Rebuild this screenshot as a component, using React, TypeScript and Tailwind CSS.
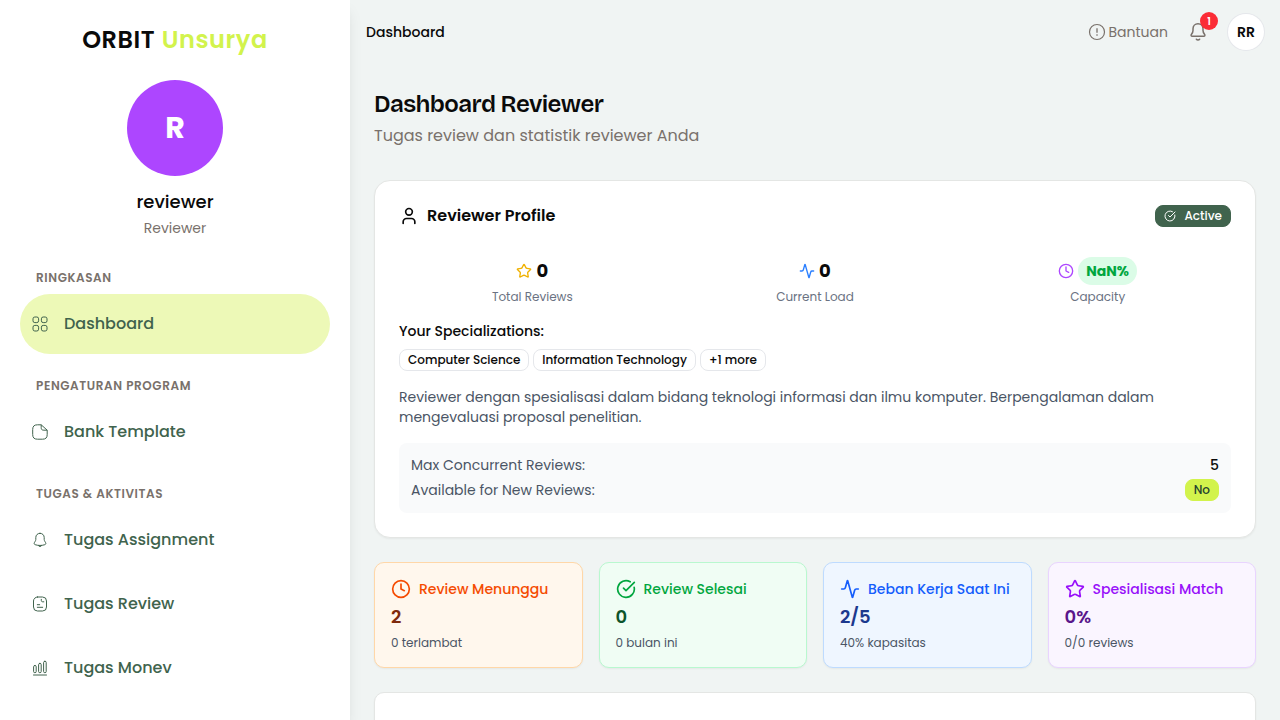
import type { ReactNode } from "react";
import { Activity, CircleCheckBig, Clock, Star, User } from "lucide-react";

type NavItem = { label: string; icon: ReactNode; active?: boolean };
type NavSection = { title: string; items: NavItem[] };

const GridIcon = () => (
  <svg className="size-4 shrink-0" viewBox="0 0 16 16" fill="none" stroke="currentColor" aria-hidden="true">
    <rect x="1" y="1" width="5.6" height="5.6" rx="1.8" />
    <rect x="9.4" y="1" width="5.6" height="5.6" rx="1.8" />
    <rect x="1" y="9.4" width="5.6" height="5.6" rx="1.8" />
    <rect x="9.4" y="9.4" width="5.6" height="5.6" rx="1.8" />
  </svg>
);

const NoteIcon = () => (
  <svg className="size-4 shrink-0" viewBox="0 0 16 16" fill="none" stroke="currentColor" strokeLinejoin="round" aria-hidden="true">
    <path d="M9.2 .8H5.5C2.2.8.7 2.2.7 5.5v5c0 3.3 1.5 4.7 4.8 4.7h5c3.3 0 4.7-1.4 4.7-4.7V6.2z" />
    <path d="M9.2.8v2.7c0 2 .7 2.7 2.7 2.7h3.3" />
  </svg>
);

const NotificationIcon = () => (
  <svg className="size-4 shrink-0" viewBox="0 0 16 16" fill="none" stroke="currentColor" strokeLinecap="round" strokeLinejoin="round" aria-hidden="true">
    <path d="M8 1.3C5.5 1.300 3.800 3.100 3.800 5.500v2c0 .6-.3 1.300-.6 1.800l-.8 1.300c-.5.9-.2 1.800.8 2.100 3.100 1 6.500 1 9.600 0 1-.3 1.300-1.300.8-2.100l-.8-1.300c-.3-.5-.6-1.200-.6-1.800v-2C12.200 3.100 10.500 1.300 8 1.300z" />
    <path d="M6.200 13.500c.7 1.400 2.900 1.400 3.600 0" />
  </svg>
);

const DocumentIcon = () => (
  <svg className="size-4 shrink-0" viewBox="0 0 16 16" fill="none" stroke="currentColor" strokeLinecap="round" strokeLinejoin="round" aria-hidden="true">
    <rect x="1.500" y="1" width="13" height="14" rx="4" />
    <path d="M9.300 3.300v1.200c0 .8.600 1.300 1.300 1.300h1.200M5.300 8.700h2.400M5.300 11.300h5.400" />
  </svg>
);

const ChartIcon = () => (
  <svg className="size-4 shrink-0" viewBox="0 0 16 16" fill="none" stroke="currentColor" strokeLinecap="round" aria-hidden="true">
    <path d="M1.500 15h13" />
    <rect x="1.600" y="5.500" width="2.600" height="7.200" rx="1.200" />
    <rect x="6.600" y="3.400" width="2.600" height="9.300" rx="1.200" />
    <rect x="11.600" y="1.300" width="2.600" height="11.400" rx="1.200" />
  </svg>
);

const InfoIcon = () => (
  <svg className="size-4 shrink-0 overflow-visible" viewBox="0 0 16 16" fill="none" stroke="currentColor" aria-hidden="true">
    <circle cx="8" cy="8" r="7.500" strokeWidth="1.200" />
    <path d="M8 4.200v4.600M8 10.200v1.500" strokeWidth="1.300" />
  </svg>
);

const BellIcon = () => (
  <svg className="size-5" viewBox="0 0 20 20" fill="none" stroke="currentColor" strokeWidth="1.500" strokeLinecap="round" strokeLinejoin="round" aria-hidden="true">
    <path d="M10 1.700C7 1.700 5 3.900 5 6.700v1.900c0 1.500-.5 2.500-1.500 3.700-.8 1-.4 2 .8 2h11.400c1.200 0 1.600-1 .8-2C15.500 11.100 15 10.100 15 8.600V6.700c0-2.800-2-5-5-5z" />
    <path d="M8.400 17.200c.7.9 2.500.9 3.200 0" />
  </svg>
);

const sections: NavSection[] = [
  { title: "Ringkasan", items: [{ label: "Dashboard", icon: <GridIcon />, active: true }] },
  { title: "Pengaturan Program", items: [{ label: "Bank Template", icon: <NoteIcon /> }] },
  {
    title: "Tugas & Aktivitas",
    items: [
      { label: "Tugas Assignment", icon: <NotificationIcon /> },
      { label: "Tugas Review", icon: <DocumentIcon /> },
      { label: "Tugas Monev", icon: <ChartIcon /> },
    ],
  },
];

const stats = [
  {
    title: "Review Menunggu",
    value: "2",
    note: "0 terlambat",
    Icon: Clock,
    card: "bg-orange-50 border-orange-200",
    head: "text-orange-600",
    number: "text-orange-900",
  },
  {
    title: "Review Selesai",
    value: "0",
    note: "0 bulan ini",
    Icon: CircleCheckBig,
    card: "bg-green-50 border-green-200",
    head: "text-green-600",
    number: "text-green-900",
  },
  {
    title: "Beban Kerja Saat Ini",
    value: "2/5",
    note: "40% kapasitas",
    Icon: Activity,
    card: "bg-blue-50 border-blue-200",
    head: "text-blue-600",
    number: "text-blue-900",
  },
  {
    title: "Spesialisasi Match",
    value: "0%",
    note: "0/0 reviews",
    Icon: Star,
    card: "bg-purple-50 border-purple-200",
    head: "text-purple-600",
    number: "text-purple-900",
  },
];

const specializations = ["Computer Science", "Information Technology", "+1 more"];

function Sidebar() {
  return (
    <aside className="w-[350px] shrink-0 overflow-hidden bg-white px-5 pt-5 shadow-lg">
      <div className="text-center text-2xl leading-10 font-semibold tracking-wide">
        ORBIT <span className="text-[#d2f34c]">Unsurya</span>
      </div>

      <div className="mt-5 flex flex-col items-center">
        <div className="flex size-24 items-center justify-center rounded-full bg-purple-500 text-3xl font-bold text-white">
          R
        </div>
        <p className="mt-3 text-lg font-medium">reviewer</p>
        <p className="mt-0.5 text-sm text-stone-500">Reviewer</p>
      </div>

      <nav className="mt-4">
        {sections.map((section) => (
          <div key={section.title} className="mb-2">
            <h2 className="px-4 pt-4 pb-2 text-xs font-semibold tracking-wider text-stone-500 uppercase">
              {section.title}
            </h2>
            <ul className="space-y-1">
              {section.items.map((item) => (
                <li key={item.label}>
                  <a
                    href="#"
                    className={`flex h-15 items-center gap-4 rounded-full px-3 font-medium text-[#40634d] ${
                      item.active ? "bg-[#edf9b7]" : ""
                    }`}
                  >
                    {item.icon}
                    {item.label}
                  </a>
                </li>
              ))}
            </ul>
          </div>
        ))}
      </nav>
    </aside>
  );
}

function Header() {
  return (
    <header className="flex h-16 shrink-0 items-center justify-between px-4">
      <span className="text-sm font-medium">Dashboard</span>
      <div className="flex items-center gap-5">
        <a href="#" className="flex items-center gap-1 text-sm text-stone-500">
          <InfoIcon />
          Bantuan
        </a>
        <button type="button" aria-label="Notifikasi" className="relative text-stone-500">
          <BellIcon />
          <span className="absolute -top-2.5 left-3 flex size-[18px] items-center justify-center rounded-full bg-[#fb2c36] text-[10px] font-semibold text-white">
            1
          </span>
        </button>
        <button
          type="button"
          className="flex size-9 items-center justify-center rounded-full bg-white text-sm font-semibold ring-1 ring-gray-200"
        >
          RR
        </button>
      </div>
    </header>
  );
}

function ProfileCard() {
  return (
    <section className="rounded-2xl border border-[#e4e6e4] bg-white p-6 shadow-xs">
      <div className="flex items-center justify-between">
        <h2 className="flex items-center gap-2 leading-none font-semibold">
          <User className="size-5" />
          Reviewer Profile
        </h2>
        <span className="flex items-center gap-2 rounded-lg border border-[#40634d] bg-[#40634d] px-2 py-0.5 text-xs font-medium text-white">
          <CircleCheckBig className="size-3" />
          Active
        </span>
      </div>

      <div className="mt-7 grid grid-cols-3 gap-4 text-center">
        <div>
          <div className="flex h-8 items-center justify-center gap-1">
            <Star className="size-4 text-yellow-500" />
            <span className="text-lg font-bold">0</span>
          </div>
          <p className="mt-0.5 text-xs text-gray-500">Total Reviews</p>
        </div>
        <div>
          <div className="flex h-8 items-center justify-center gap-1">
            <Activity className="size-4 text-blue-500" />
            <span className="text-lg font-bold">0</span>
          </div>
          <p className="mt-0.5 text-xs text-gray-500">Current Load</p>
        </div>
        <div>
          <div className="flex h-8 items-center justify-center gap-1">
            <Clock className="size-4 text-purple-500" />
            <span className="rounded-full bg-green-100 px-2 py-1 text-sm font-bold text-green-600">NaN%</span>
          </div>
          <p className="mt-0.5 text-xs text-gray-500">Capacity</p>
        </div>
      </div>

      <p className="mt-4 text-sm font-medium">Your Specializations:</p>
      <div className="mt-2 flex flex-wrap gap-1">
        {specializations.map((name) => (
          <span key={name} className="rounded-lg border border-gray-200 px-2 py-0.5 text-xs font-medium">
            {name}
          </span>
        ))}
      </div>

      <p className="mt-4 text-sm text-gray-600">
        Reviewer dengan spesialisasi dalam bidang teknologi informasi dan ilmu komputer. Berpengalaman dalam
        mengevaluasi proposal penelitian.
      </p>

      <dl className="mt-4 space-y-1 rounded-lg bg-gray-50 p-3 text-sm">
        <div className="flex items-center justify-between">
          <dt className="text-gray-600">Max Concurrent Reviews:</dt>
          <dd className="font-medium">5</dd>
        </div>
        <div className="flex items-center justify-between">
          <dt className="text-gray-600">Available for New Reviews:</dt>
          <dd className="rounded-lg border border-[#d2f34c] bg-[#d2f34c] px-2 py-0.5 text-xs font-medium text-[#23422f]">
            No
          </dd>
        </div>
      </dl>
    </section>
  );
}

export default function App() {
  return (
    <div className="flex h-screen overflow-hidden bg-[#f0f4f3] font-['Poppins','Inter',sans-serif] text-neutral-950">
      <Sidebar />
      <div className="flex min-w-0 flex-1 flex-col">
        <Header />
        <main className="flex-1 overflow-hidden p-6">
          <h1 className="font-['Bricolage_Grotesque','Inter',sans-serif] text-2xl font-semibold tracking-tight">
            Dashboard Reviewer
          </h1>
          <p className="mt-1 text-stone-500">Tugas review dan statistik reviewer Anda</p>

          <div className="mt-8 space-y-6">
            <ProfileCard />
            <div className="grid grid-cols-4 gap-4">
              {stats.map(({ title, value, note, Icon, card, head, number }) => (
                <div key={title} className={`rounded-[10px] border p-4 shadow-xs ${card}`}>
                  <div className={`flex items-center gap-2 text-sm font-medium whitespace-nowrap ${head}`}>
                    <Icon className="size-5 shrink-0" />
                    {title}
                  </div>
                  <p className={`mt-1 text-lg font-semibold ${number}`}>{value}</p>
                  <p className="mt-1 text-xs text-gray-600">{note}</p>
                </div>
              ))}
            </div>
            <section className="h-60 rounded-[10px] border border-[#e4e6e4] bg-white shadow-xs" />
          </div>
        </main>
      </div>
    </div>
  );
}
